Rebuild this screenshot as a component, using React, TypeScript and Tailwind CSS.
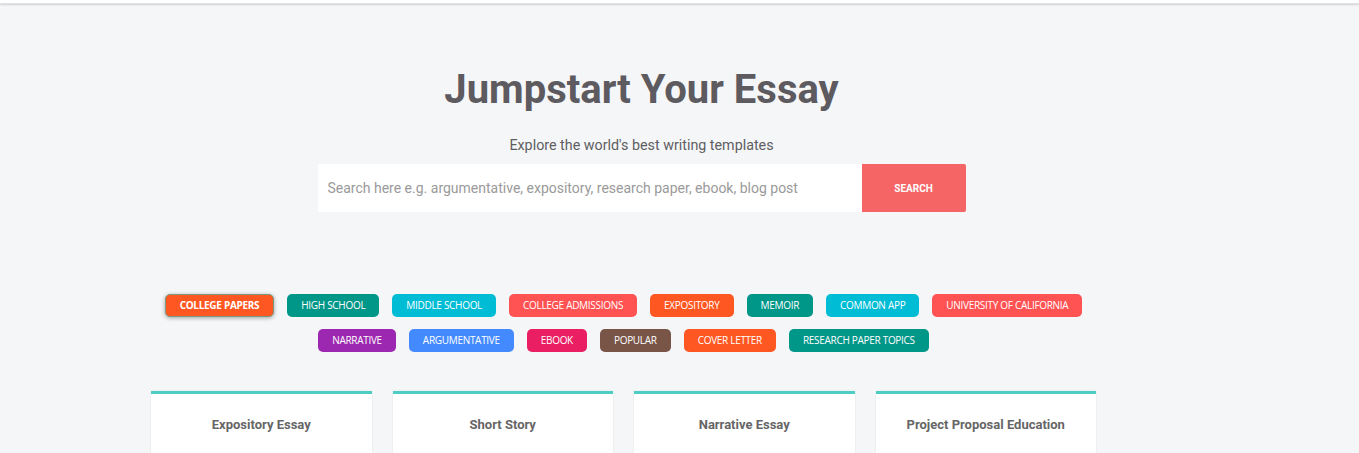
import React from 'react';

type Tag = { label: string; color: string; active?: boolean };

const firstRow: Tag[] = [
  { label: 'College Papers', color: 'bg-[#ff5722]', active: true },
  { label: 'High School', color: 'bg-[#009688]' },
  { label: 'Middle School', color: 'bg-[#00bcd4]' },
  { label: 'College Admissions', color: 'bg-[#ff5252]' },
  { label: 'Expository', color: 'bg-[#ff5722]' },
  { label: 'Memoir', color: 'bg-[#009688]' },
  { label: 'Common App', color: 'bg-[#00bcd4]' },
  { label: 'University of California', color: 'bg-[#ff5252]' },
];

const secondRow: Tag[] = [
  { label: 'Narrative', color: 'bg-[#9c27b0]' },
  { label: 'Argumentative', color: 'bg-[#448aff]' },
  { label: 'Ebook', color: 'bg-[#e91e63]' },
  { label: 'Popular', color: 'bg-[#795548]' },
  { label: 'Cover Letter', color: 'bg-[#ff5722]' },
  { label: 'Research Paper Topics', color: 'bg-[#009688]' },
];

const templates = ['Expository Essay', 'Short Story', 'Narrative Essay', 'Project Proposal Education'];

const TagPill: React.FC<{ tag: Tag }> = ({ tag }) => (
  <a
    href="#"
    className={`${tag.color} h-[23px] px-[14px] flex items-center rounded-[5px] text-white uppercase text-[10px] tracking-[-0.3px] whitespace-nowrap ${
      tag.active ? 'font-bold border border-[#7a9a80] shadow-[0_1px_4px_rgba(0,0,0,0.35)]' : ''
    }`}
  >
    {tag.label}
  </a>
);

export default function App() {
  return (
    <div className="min-h-[453px] bg-[#f5f6f8] font-['Roboto',sans-serif]">
      {/* Top bar */}
      <div className="h-[4px] bg-white shadow-[0_1px_2px_rgba(0,0,0,0.15)] border-b border-[#e2e2e2]" />

      {/* Hero */}
      <div className="w-[1283px] flex flex-col items-center pt-[62px]">
        <h1 className="text-[40px] leading-[48px] font-bold text-[#5d5a60]">Jumpstart Your Essay</h1>
        <p className="mt-[21px] text-[14.3px] leading-[20px] text-[#5e5e62]">Explore the world's best writing templates</p>
        <div className="mt-[9px] flex h-[48px]">
          <input
            type="text"
            placeholder="Search here e.g. argumentative, expository, research paper, ebook, blog post"
            className="w-[544px] h-full bg-white px-[10px] text-[14px] text-[#555] placeholder:text-[#9a9a9a] outline-none"
          />
          <button className="w-[104px] h-full bg-[#f56565] rounded-r-[2px] text-white text-[10px] font-bold uppercase">
            Search
          </button>
        </div>
      </div>

      {/* Categories + templates */}
      <div className="ml-[151px] w-[945px] font-['Open_Sans',sans-serif]">
        <div className="mt-[82px] flex flex-col items-center gap-[12px]">
          <div className="flex gap-[13px] items-center">
            {firstRow.map((t) => (
              <TagPill key={t.label} tag={t} />
            ))}
          </div>
          <div className="flex gap-[13px] items-center">
            {secondRow.map((t) => (
              <TagPill key={t.label} tag={t} />
            ))}
          </div>
        </div>

        <div className="mt-[39px] grid grid-cols-4 gap-[21px]">
          {templates.map((name) => (
            <div
              key={name}
              className="h-[80px] bg-white border-t-[3px] border-[#4ecdc4] shadow-[0_0_2px_rgba(0,0,0,0.08)] pt-[21px] text-center"
            >
              <h3 className="font-['Roboto',sans-serif] text-[13px] font-bold text-[#666]">{name}</h3>
            </div>
          ))}
        </div>
      </div>
    </div>
  );
}
